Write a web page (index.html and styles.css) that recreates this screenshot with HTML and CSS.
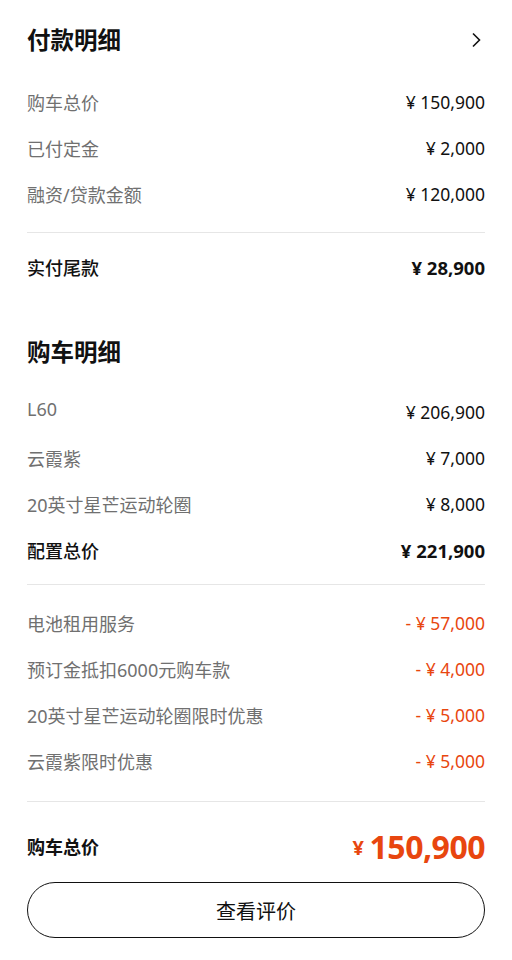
FILE: index.html
```html
<!DOCTYPE html>
<html lang="zh-CN">
<head>
  <meta charset="UTF-8">
  <meta name="viewport" content="width=device-width, initial-scale=1.0">
  <title>付款明细</title>
  <link rel="stylesheet" href="styles.css">
</head>
<body>
  <div class="page">
    <section class="block">
      <div class="block-head">
        <h2>付款明细</h2>
        <svg class="chevron" width="10" height="16" viewBox="0 0 10 16">
          <path d="M2 1.5 L8.5 8 L2 14.5" fill="none" stroke="#111" stroke-width="1.6"/>
        </svg>
      </div>
      <div class="rows">
        <div class="row"><span class="label">购车总价</span><span class="value">¥ 150,900</span></div>
        <div class="row"><span class="label">已付定金</span><span class="value">¥ 2,000</span></div>
        <div class="row"><span class="label">融资/贷款金额</span><span class="value">¥ 120,000</span></div>
      </div>
      <hr class="divider">
      <div class="row row-strong"><span class="label">实付尾款</span><span class="value">¥ 28,900</span></div>
    </section>

    <section class="block block-second">
      <div class="block-head">
        <h2>购车明细</h2>
      </div>
      <div class="rows rows-config">
        <div class="row"><span class="label">L60</span><span class="value">¥ 206,900</span></div>
        <div class="row"><span class="label">云霞紫</span><span class="value">¥ 7,000</span></div>
        <div class="row"><span class="label">20英寸星芒运动轮圈</span><span class="value">¥ 8,000</span></div>
        <div class="row row-sub"><span class="label">配置总价</span><span class="value">¥ 221,900</span></div>
      </div>
      <hr class="divider divider-mid">
      <div class="rows rows-discount">
        <div class="row"><span class="label">电池租用服务</span><span class="value minus">- ¥ 57,000</span></div>
        <div class="row"><span class="label">预订金抵扣6000元购车款</span><span class="value minus">- ¥ 4,000</span></div>
        <div class="row"><span class="label">20英寸星芒运动轮圈限时优惠</span><span class="value minus">- ¥ 5,000</span></div>
        <div class="row"><span class="label">云霞紫限时优惠</span><span class="value minus">- ¥ 5,000</span></div>
      </div>
      <hr class="divider divider-last">
      <div class="row row-total">
        <span class="label">购车总价</span>
        <span class="total-price"><span class="yen">¥</span>150,900</span>
      </div>
    </section>

    <button class="review-btn" type="button">查看评价</button>
  </div>
</body>
</html>
```

FILE: styles.css
```css
body {
  margin: 0;
  background-color: #fff;
  font-family: "Noto Sans", "Noto Sans CJK SC", sans-serif;
  color: #111;
}
.page {
  padding: 24px 27px 0;
}
.block-head {
  display: flex;
  justify-content: space-between;
  align-items: center;
  height: 32px;
}
.block-head h2 {
  margin: 0;
  font-size: 23.5px;
  font-weight: 700;
  line-height: 32px;
}
.chevron {
  margin-right: 4px;
}
.rows {
  margin-top: 23px;
}
.row {
  display: flex;
  justify-content: space-between;
  align-items: center;
  height: 46px;
}
.label {
  font-size: 18px;
  color: #707070;
}
.value {
  font-size: 17.5px;
  color: #111;
}
.minus {
  color: #e8460f;
}
.divider {
  margin: 15px 0 11px;
  border: none;
  border-top: 1px solid #e6e6e6;
}
.row-strong .label,
.row-sub .label {
  color: #111;
  font-weight: 500;
}
.row-strong .value,
.row-sub .value {
  font-size: 18.5px;
  font-weight: 700;
}
.block-second {
  margin-top: 46px;
}
.rows-config {
  margin-top: 21px;
}
.rows-config .row:first-child .label {
  margin-top: -6px;
}
.divider-mid {
  margin: 11px 0 15px;
}
.rows-discount {
  margin-top: 0;
}
.divider-last {
  margin: 17px 0 21px;
}
.row-total .label {
  color: #111;
  font-weight: 700;
}
.total-price {
  color: #e8460f;
  font-size: 32px;
  font-weight: 700;
  letter-spacing: -0.5px;
}
.total-price .yen {
  font-size: 20px;
  margin-right: 6px;
  vertical-align: 4px;
}
.review-btn {
  display: block;
  width: 100%;
  height: 56px;
  margin-top: 13px;
  background: #fff;
  border: 1.5px solid #111;
  border-radius: 28px;
  font-family: inherit;
  font-size: 20px;
  color: #111;
  cursor: pointer;
}
```
